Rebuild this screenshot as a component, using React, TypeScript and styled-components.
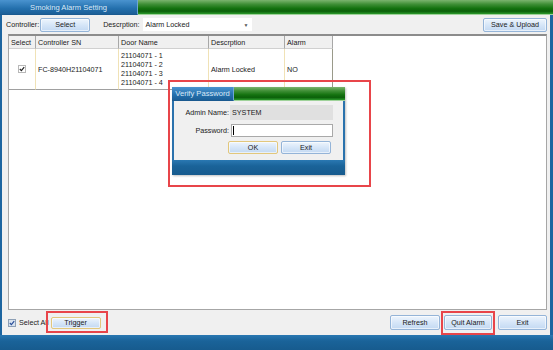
import React from 'react';
import styled, { createGlobalStyle } from 'styled-components';

const GlobalStyle = createGlobalStyle`
  body {
    margin: 0;
    font-family: 'Liberation Sans', Arial, sans-serif;
    font-size: 7.2px;
    color: #1a1a1a;
  }
`;

const Window = styled.div`
  position: relative;
  width: 553px;
  height: 350px;
  display: flex;
  flex-direction: column;
  background: #f0f0f0;
  overflow: hidden;
`;

const TitleBar = styled.div`
  height: 15px;
  display: flex;
  flex-shrink: 0;
`;

const TitleTab = styled.div<{ $w: number }>`
  width: ${(p) => p.$w}px;
  display: flex;
  align-items: center;
  justify-content: center;
  color: #dbe8f6;
  font-size: 7.6px;
  background: linear-gradient(#4a93cf, #2470ad 60%, #1c5f97);
  border-right: 1px solid #6fa6d4;
  border-bottom: 1px solid #1a5a90;
  box-sizing: border-box;
`;

const GreenFill = styled.div`
  flex: 1;
  background: linear-gradient(#7bb46e 0%, #3f8f36 30%, #14720f 60%, #0b600a 80%, #2c9a2c 100%);
  border-bottom: 1px solid #9fd29a;
  box-sizing: border-box;
`;

const Body = styled.div`
  flex: 1;
  display: flex;
  flex-direction: column;
  border-left: 2px solid #1d65a0;
  border-right: 3px solid #1d65a0;
  padding: 0 3px 0 6px;
  min-height: 0;
`;

const Toolbar = styled.div`
  height: 19px;
  display: flex;
  align-items: center;
  margin-left: -2px;
  flex-shrink: 0;
`;

const Label = styled.span<{ $gap?: number }>`
  white-space: nowrap;
  margin-left: ${(p) => p.$gap ?? 0}px;
`;

const Button = styled.button<{ $w: number; $h?: number; $focus?: boolean; $gap?: number }>`
  width: ${(p) => p.$w}px;
  height: ${(p) => p.$h ?? 14}px;
  margin-left: ${(p) => p.$gap ?? 0}px;
  padding: 0;
  font-family: inherit;
  font-size: 7.2px;
  color: #1a1a1a;
  border: 1px solid ${(p) => (p.$focus ? '#e2c77c' : '#94b4d8')};
  border-radius: 2px;
  background: linear-gradient(#eef5fd, #d6e6f8 50%, #c3d9f2);
  box-shadow: inset 0 0 0 1px rgba(255, 255, 255, 0.6);
  cursor: pointer;
`;

const Dropdown = styled.div`
  width: 109px;
  height: 13px;
  margin-left: 3px;
  background: #fff;
  display: flex;
  align-items: center;
  justify-content: space-between;
  padding: 0 3px;
  box-sizing: border-box;

  span.arrow {
    font-size: 5px;
    color: #555;
  }
`;

const Spacer = styled.div`
  flex: 1;
`;

const TableBox = styled.div`
  flex: 1;
  background: #fff;
  border: 1px solid #a6a6a6;
  border-top: 2px solid #8c8c8c;
  min-height: 0;
`;

const Grid = styled.div`
  width: 324px;
  display: grid;
  grid-template-columns: 27px 83px 90px 76px 48px;
`;

const HeadCell = styled.div`
  height: 13px;
  display: flex;
  align-items: center;
  padding-left: 2px;
  background: #f0f0f0;
  border-right: 1px solid #a8a8a8;
  border-bottom: 1px solid #d0d0d0;
  box-sizing: border-box;
`;

const Cell = styled.div<{ $center?: boolean }>`
  height: 41px;
  display: flex;
  align-items: center;
  justify-content: ${(p) => (p.$center ? 'center' : 'flex-start')};
  padding-left: ${(p) => (p.$center ? 0 : 2)}px;
  border-right: 1px solid #f0e2b6;
  border-bottom: 1px solid #a0a0a0;
  box-sizing: border-box;

  &:last-child {
    border-right-color: #9a9a8a;
  }
`;

const DoorList = styled.div`
  display: flex;
  flex-direction: column;
  line-height: 9px;
`;

const CheckBox = styled.span<{ $tint?: boolean }>`
  width: 8px;
  height: 8px;
  display: inline-flex;
  align-items: center;
  justify-content: center;
  border: 1px solid ${(p) => (p.$tint ? '#8d9fb5' : '#b8b8b8')};
  background: ${(p) => (p.$tint ? '#d8e2ee' : '#fff')};
  box-sizing: border-box;
  flex-shrink: 0;
`;

const Footer = styled.div`
  height: 25px;
  display: flex;
  align-items: center;
  flex-shrink: 0;
`;

const SelectAll = styled.label`
  display: flex;
  align-items: center;
  gap: 3px;
  margin-right: 2px;
`;

const Marked = styled.span<{ $l: number; $t: number; $r: number; $b: number; $gap?: number }>`
  position: relative;
  display: inline-flex;
  margin-left: ${(p) => p.$gap ?? 0}px;

  &::after {
    content: '';
    position: absolute;
    left: -${(p) => p.$l}px;
    top: -${(p) => p.$t}px;
    right: -${(p) => p.$r}px;
    bottom: -${(p) => p.$b}px;
    border: 2px solid #e8454a;
    pointer-events: none;
  }
`;

const BottomBand = styled.div`
  height: 15px;
  flex-shrink: 0;
  background: linear-gradient(#2a78b2, #1a6399 40%, #175b8e);
`;

const DialogMark = styled.div`
  position: absolute;
  left: 168px;
  top: 80px;
  width: 203px;
  height: 107px;
  border: 2px solid #e8454a;
  box-sizing: border-box;
`;

const Dialog = styled.div`
  position: absolute;
  left: 172px;
  top: 87px;
  width: 173px;
  height: 88px;
  display: flex;
  flex-direction: column;
  box-shadow: 1px 1px 2px rgba(0, 0, 0, 0.25);
`;

const DialogTitle = styled(TitleBar)`
  height: 14px;
`;

const DialogBody = styled.div`
  flex: 1;
  display: flex;
  flex-direction: column;
  gap: 4px;
  padding-top: 4px;
  background: #f0f0f0;
  border-left: 2px solid #2a72ad;
  border-right: 2px solid #2a72ad;
`;

const FieldRow = styled.div`
  display: flex;
  align-items: center;
`;

const FieldLabel = styled.span`
  width: 55px;
  text-align: right;
  padding-right: 1px;
  white-space: nowrap;
`;

const ReadOnly = styled.div`
  width: 103px;
  height: 15px;
  display: flex;
  align-items: center;
  padding-left: 2px;
  box-sizing: border-box;
  background: #e0e0e0;
`;

const Input = styled.div`
  width: 102px;
  height: 13px;
  margin-left: 1px;
  background: #fff;
  border: 1px solid #a9a9a9;
  box-sizing: border-box;
  display: flex;
  align-items: center;
  padding-left: 1px;

  &::before {
    content: '';
    width: 1px;
    height: 9px;
    background: #000;
  }
`;

const DialogButtons = styled.div`
  display: flex;
  gap: 3px;
  padding-left: 54px;
`;

const DialogFoot = styled.div`
  height: 15px;
  background: linear-gradient(#2a78b2, #1a6399 40%, #175b8e);
`;

const Tick = ({ color }: { color: string }) => (
  <svg width="6" height="6" viewBox="0 0 6 6">
    <path d="M0.8 3 L2.4 4.6 L5.2 1.2" stroke={color} strokeWidth="1.2" fill="none" />
  </svg>
);

const doors = ['21104071 - 1', '21104071 - 2', '21104071 - 3', '21104071 - 4'];

const App = () => {
  return (
    <Window>
      <GlobalStyle />
      <TitleBar>
        <TitleTab $w={138}>Smoking Alarm Setting</TitleTab>
        <GreenFill />
      </TitleBar>
      <Body>
        <Toolbar>
          <Label>Controller:</Label>
          <Button $w={50} $gap={1}>Select</Button>
          <Label $gap={13}>Descrption:</Label>
          <Dropdown>
            <span>Alarm Locked</span>
            <span className="arrow">▼</span>
          </Dropdown>
          <Spacer />
          <Button $w={64}>Save &amp; Upload</Button>
        </Toolbar>
        <TableBox>
          <Grid>
            <HeadCell>Select</HeadCell>
            <HeadCell>Controller SN</HeadCell>
            <HeadCell>Door Name</HeadCell>
            <HeadCell>Descrption</HeadCell>
            <HeadCell>Alarm</HeadCell>
            <Cell $center>
              <CheckBox>
                <Tick color="#222" />
              </CheckBox>
            </Cell>
            <Cell>FC-8940H21104071</Cell>
            <Cell>
              <DoorList>
                {doors.map((d) => (
                  <span key={d}>{d}</span>
                ))}
              </DoorList>
            </Cell>
            <Cell>Alarm Locked</Cell>
            <Cell>NO</Cell>
          </Grid>
        </TableBox>
        <Footer>
          <SelectAll>
            <CheckBox $tint>
              <Tick color="#2a4f9a" />
            </CheckBox>
            Select All
          </SelectAll>
          <Marked $l={5} $t={6} $r={7} $b={4}>
            <Button $w={50} $h={12} $focus>Trigger</Button>
          </Marked>
          <Spacer />
          <Button $w={50} $h={15}>Refresh</Button>
          <Marked $l={3} $t={4} $r={3} $b={5} $gap={4}>
            <Button $w={48} $h={15}>Quit Alarm</Button>
          </Marked>
          <Button $w={49} $h={15} $gap={6}>Exit</Button>
        </Footer>
      </Body>
      <BottomBand />

      <DialogMark />
      <Dialog>
        <DialogTitle>
          <TitleTab $w={62}>Verify Password</TitleTab>
          <GreenFill />
        </DialogTitle>
        <DialogBody>
          <FieldRow>
            <FieldLabel>Admin Name:</FieldLabel>
            <ReadOnly>SYSTEM</ReadOnly>
          </FieldRow>
          <FieldRow>
            <FieldLabel>Password:</FieldLabel>
            <Input />
          </FieldRow>
          <DialogButtons>
            <Button $w={50} $h={13} $focus>OK</Button>
            <Button $w={50} $h={13}>Exit</Button>
          </DialogButtons>
        </DialogBody>
        <DialogFoot />
      </Dialog>
    </Window>
  );
};

export default App;
